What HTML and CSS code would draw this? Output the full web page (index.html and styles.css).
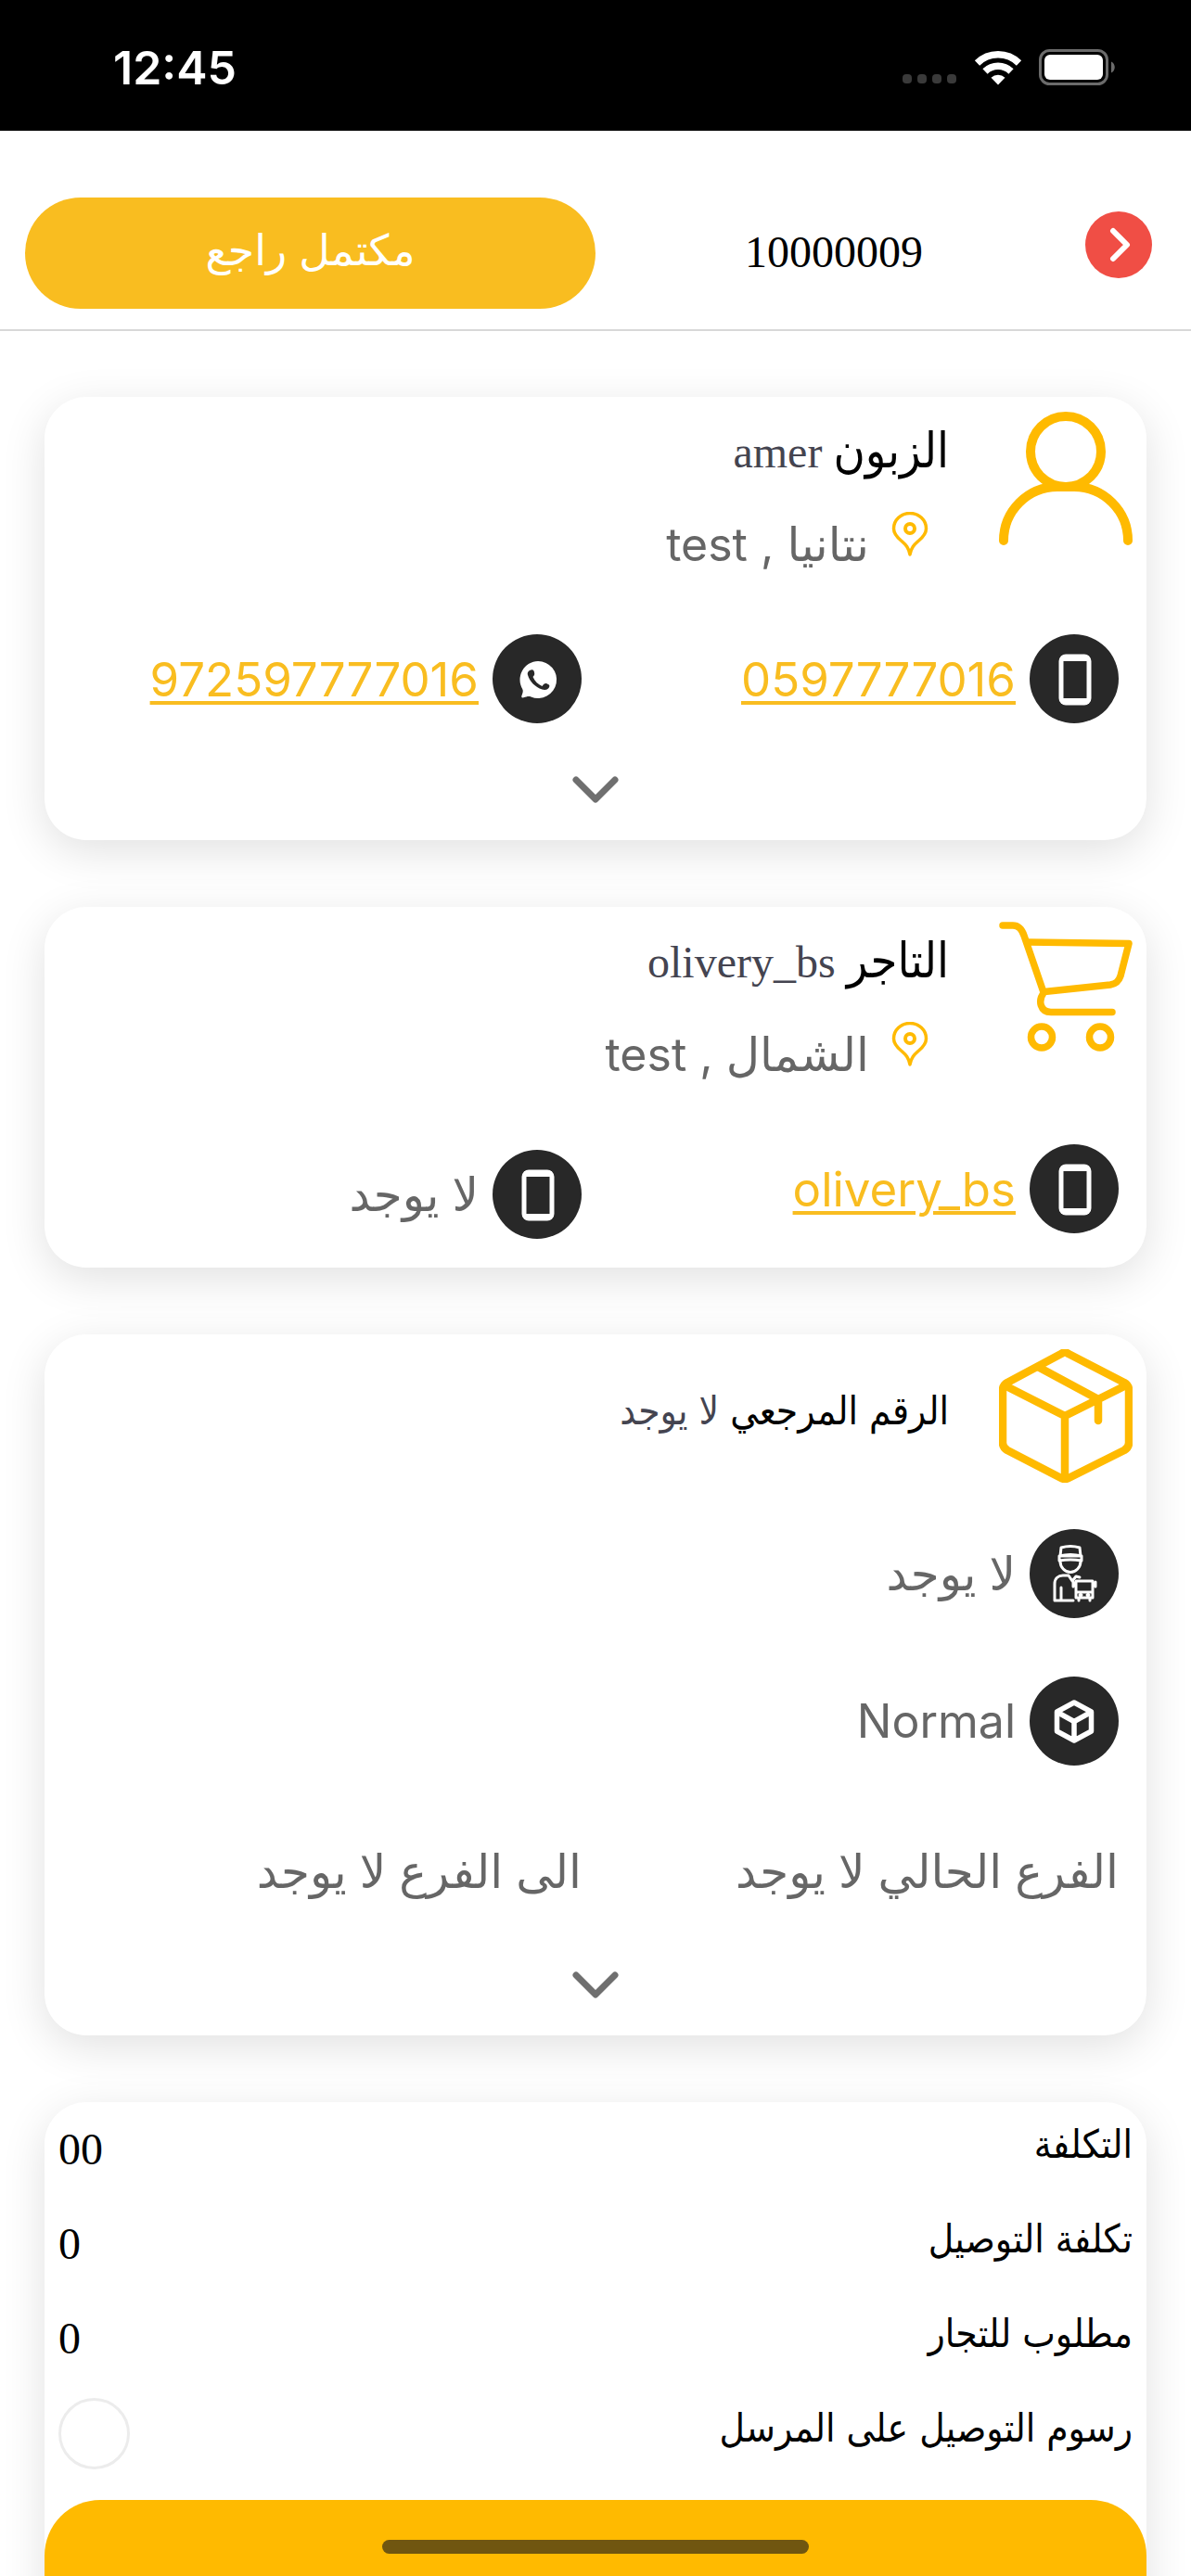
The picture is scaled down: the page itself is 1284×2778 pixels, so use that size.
FILE: index.html
```html
<!DOCTYPE html>
<html lang="ar" dir="rtl">
<head>
    <meta charset="UTF-8">
    <meta name="viewport" content="width=device-width, initial-scale=1.0">
    <title>10000009</title>
    <link rel="stylesheet" href="styles.css">
</head>
<body>
    <!-- Shared icons -->
    <svg class="sprite" aria-hidden="true">
        <symbol id="icon-pin" viewBox="0 0 48 48">
            <path d="M24 46c-1.500-8-4.500-10.500-9-14.500C9.500 27 6.500 23.500 6.500 18a17.500 16.500 0 0 1 35 0c0 5.500-3 9-8.500 13.500-4.500 4-7.500 6.500-9 14.500z" fill="none" stroke="#ffba00" stroke-width="3.500" stroke-linejoin="round"/>
            <circle cx="24" cy="18" r="5" fill="none" stroke="#ffba00" stroke-width="4"/>
        </symbol>
        <symbol id="icon-phone" viewBox="0 0 96 96">
            <rect x="34" y="24" width="30" height="50" rx="5" fill="none" stroke="#fff" stroke-width="5"/>
            <path d="M34 26h30M34 72h30" stroke="#fff" stroke-width="6"/>
        </symbol>
        <symbol id="icon-chevron" viewBox="0 0 54 32">
            <path d="M6 5l21 21L48 5" fill="none" stroke="#6f6f6f" stroke-width="7" stroke-linecap="round" stroke-linejoin="round"/>
        </symbol>
    </svg>

    <div class="status-bar" dir="ltr">
        <span class="clock">12:45</span>
        <div class="indicators">
            <svg width="60" height="54" viewBox="0 0 60 54">
                <g fill="#3a3a3a"><rect x="1" y="34" width="10" height="10" rx="4"/><rect x="17" y="34" width="10" height="10" rx="4"/><rect x="33" y="34" width="10" height="10" rx="4"/><rect x="49" y="34" width="10" height="10" rx="4"/></g>
            </svg>
            <svg width="52" height="38" viewBox="0 0 52 38">
                <g fill="none" stroke="#fff" stroke-width="7.500">
                    <path d="M3.500 14a32 32 0 0 1 45 0"/>
                    <path d="M12 23a20 20 0 0 1 28 0"/>
                </g>
                <path d="M26 37.500l-7.500-7.700a11 11 0 0 1 15 0z" fill="#fff"/>
            </svg>
            <svg width="84" height="40" viewBox="0 0 84 40">
                <rect x="1.500" y="1.500" width="72" height="36" rx="10" fill="none" stroke="#6b6b6b" stroke-width="3"/>
                <rect x="6" y="6" width="63" height="27" rx="6" fill="#fff"/>
                <path d="M78 13.500c5 2 5 10 0 12z" fill="#6b6b6b"/>
            </svg>
        </div>
    </div>

    <header class="top-bar">
        <button class="back-button" aria-label="رجوع">
            <svg width="72" height="72" viewBox="0 0 72 72">
                <path d="M30 21l15 15-15 15" fill="none" stroke="#fff" stroke-width="6" stroke-linecap="round" stroke-linejoin="round"/>
            </svg>
        </button>
        <h1 class="order-number">10000009</h1>
        <button class="status-button">مكتمل راجع</button>
    </header>

    <main>
        <section class="card">
            <div class="card-head">
                <svg class="card-icon" viewBox="0 0 144 144">
                    <g fill="none" stroke="#ffba00" stroke-width="10" stroke-linecap="round">
                        <circle cx="72" cy="43" r="38"/>
                        <path d="M5 139c0-32 26-58 58-58h18c32 0 58 26 58 58"/>
                    </g>
                </svg>
                <div>
                    <h2><span class="label">الزبون</span> amer</h2>
                    <p class="address"><svg class="pin"><use href="#icon-pin"/></svg><span>نتانيا , test</span></p>
                </div>
            </div>
            <div class="row">
                <div class="item"><svg class="badge"><use href="#icon-phone"/></svg><a href="tel:0597777016">0597777016</a></div>
                <div class="item">
                    <svg class="badge" viewBox="0 0 96 96">
                        <path d="M49 29a20 20 0 1 1-7.500 38.500c-3-1-5 0-8 .8-2 .5-2.700-.3-2-2.300.8-2.500 2-4.500.7-7A20 20 0 0 1 49 29z" fill="#fff"/>
                        <path d="M41.500 38.500c2-.8 3 .3 3.500 2.500.6 2.400.2 3-1.500 5 2.500 5 5.500 8 10 10 1.800-2.500 3-3.500 5.500-2.500 2.700 1 3 2 1.500 4.500-1.500 2-4 2.500-7 1.500C46 57 40 51 38 44c-.8-3 .8-4.700 3.500-5.500z" fill="#282828"/>
                    </svg>
                    <a href="https://wa.me/972597777016">972597777016</a>
                </div>
            </div>
            <button class="expand" aria-label="المزيد"><svg width="54" height="32"><use href="#icon-chevron"/></svg></button>
        </section>

        <section class="card">
            <div class="card-head">
                <svg class="card-icon" viewBox="0 0 144 144">
                    <g fill="none" stroke="#ffba00" stroke-width="7.500" stroke-linecap="round" stroke-linejoin="round">
                        <path d="M4 4h11c7 0 10 5 12 11l21 61"/>
                        <path d="M31 22l109 1.500-9 35c-2 6-5 8.500-11 9.500l-71 7.500c-8 10-4 22 7 22h66"/>
                        <circle cx="46" cy="124.500" r="11.500"/>
                        <circle cx="109" cy="124.500" r="11.500"/>
                    </g>
                </svg>
                <div>
                    <h2><span class="label">التاجر</span> olivery_bs</h2>
                    <p class="address"><svg class="pin"><use href="#icon-pin"/></svg><span>الشمال , test</span></p>
                </div>
            </div>
            <div class="row">
                <div class="item"><svg class="badge"><use href="#icon-phone"/></svg><a href="#">olivery_bs</a></div>
                <div class="item plain"><svg class="badge"><use href="#icon-phone"/></svg><span>لا يوجد</span></div>
            </div>
        </section>

        <section class="card">
            <div class="card-head single">
                <svg class="card-icon" viewBox="0 0 144 144">
                    <g fill="none" stroke="#ffba00" stroke-width="8.500" stroke-linecap="round" stroke-linejoin="round">
                        <path d="M67 5q4-3 8 0l60 31q5 3 5 8v57q0 5-5 8l-60 30q-4 2-8 0l-58-30q-5-3-5-8V44q0-5 5-8z"/>
                        <path d="M6 39l65 33 66-33M71 72v66M42 19l65 35v23"/>
                    </g>
                </svg>
                <h2><span class="label">الرقم المرجعي</span> <span class="value">لا يوجد</span></h2>
            </div>
            <div class="row">
                <div class="item plain">
                    <svg class="badge" viewBox="0 0 96 96">
                        <g fill="none" stroke="#fff" stroke-width="3" stroke-linecap="round" stroke-linejoin="round">
                            <path d="M34 20q10-3 20 0l1 9H33zM32 29q12-3 24 0v5q-12-2-24 0z"/>
                            <path d="M33 35c0 6 5 11.500 11 11.500S55 41 55 35"/>
                            <path d="M47 77H27V59c0-6 4-9 9-9h6l4 6 4-5 4 1M34 77V63"/>
                            <path d="M50 56h18v18H50zM47 57v5M71 57v5M50 68h18M53 74v3M65 74v3M54 71h2M62 71h2"/>
                        </g>
                    </svg>
                    <span>لا يوجد</span>
                </div>
            </div>
            <div class="row">
                <div class="item">
                    <svg class="badge" viewBox="0 0 96 96">
                        <path d="M48 28l18.500 10v21L48 69 29.500 59V38zM30 38.500l18 10 18-10M48 48.500V69" fill="none" stroke="#fff" stroke-width="5.500" stroke-linejoin="round"/>
                    </svg>
                    <span>Normal</span>
                </div>
            </div>
            <div class="row">
                <div class="item text-only">الفرع الحالي لا يوجد</div>
                <div class="item text-only">الى الفرع لا يوجد</div>
            </div>
            <button class="expand" aria-label="المزيد"><svg width="54" height="32"><use href="#icon-chevron"/></svg></button>
        </section>

        <section class="card totals">
            <div class="total-row"><span class="label">التكلفة</span><span>00</span></div>
            <div class="total-row"><span class="label">تكلفة التوصيل</span><span>0</span></div>
            <div class="total-row"><span class="label">مطلوب للتجار</span><span>0</span></div>
            <div class="total-row">
                <label class="label" for="sender-fees">رسوم التوصيل على المرسل</label>
                <input type="checkbox" id="sender-fees">
            </div>
            <button class="main-action" aria-label="تغيير الحالة"></button>
        </section>
    </main>
    <div class="home-indicator"></div>
</body>
</html>
```
FILE: styles.css
```css
* {
    box-sizing: border-box;
}
body {
    margin: 0;
    height: 100vh;
    overflow: hidden;
    background: #ffffff;
    color: #666666;
    font-family: Inter, "DejaVu Sans", sans-serif;
    font-size: 50px;
}
h1, h2, p {
    margin: 0;
    font-weight: normal;
}
svg {
    display: block;
    flex-shrink: 0;
}
button {
    border: none;
    padding: 0;
    background: none;
    font-family: inherit;
    cursor: pointer;
}
.sprite {
    position: absolute;
    width: 0;
    height: 0;
}

/* Status bar */
.status-bar {
    display: flex;
    justify-content: space-between;
    align-items: center;
    height: 141px;
    padding: 5px 80px 0 122px;
    background: #000000;
    color: #ffffff;
}
.clock {
    font-size: 50px;
    font-weight: 600;
}
.indicators {
    display: flex;
    align-items: center;
    gap: 18px;
}

/* Top bar */
.top-bar {
    display: flex;
    align-items: center;
    padding: 72px 27px 22px;
    border-bottom: 2px solid #d8d8d8;
}
.back-button {
    align-self: flex-start;
    margin: 15px 15px 0 0;
    border-radius: 50%;
    background: #f04e45;
}
.order-number {
    flex: 1;
    padding: 0 14px 4px 0;
    color: #000000;
    font-family: "Liberation Serif", serif;
    font-size: 48px;
    text-align: center;
}
.status-button {
    width: 50%;
    height: 120px;
    padding-bottom: 8px;
    border-radius: 60px;
    background: #f9bd20;
    color: #ffffff;
    font-size: 46px;
}

/* Cards */
main {
    display: flex;
    flex-direction: column;
    gap: 72px;
    padding: 71px 48px 0;
}
.card {
    border-radius: 45px;
    background: #ffffff;
    box-shadow: 0 12px 48px rgba(0, 0, 0, 0.12);
}
.card-head {
    display: flex;
    gap: 54px;
    padding: 16px 15px 62px;
}
.card-head.single {
    padding-bottom: 44px;
}
.card-icon {
    width: 144px;
    height: 144px;
}
h2 {
    color: #444450;
    font-family: "Liberation Serif", "DejaVu Sans Condensed", serif;
    font-size: 48px;
    line-height: 88px;
}
.single h2 {
    line-height: 130px;
}
.label, .value {
    font-family: "DejaVu Sans Condensed", "DejaVu Sans", sans-serif;
    font-size: 42px;
    line-height: 1;
}
.label {
    color: #000000;
}
.card-head:not(.single) .label {
    font-size: 52px;
}
.address {
    display: flex;
    gap: 20px;
    margin-top: 20px;
    padding-right: 18px;
    line-height: 70px;
}
.pin {
    width: 48px;
    height: 48px;
}
.row {
    display: flex;
    padding-right: 30px;
}
.row + .row {
    margin-top: 63px;
}
.item {
    display: flex;
    align-items: center;
    gap: 15px;
    width: 50%;
    height: 96px;
}
.item.plain {
    height: 102px;
    padding-top: 6px;
}
.item.text-only {
    height: 102px;
}
.item a {
    color: #f9bd20;
    font-size: 51px;
    text-decoration-thickness: 4px;
    text-underline-offset: 5px;
}
.badge {
    width: 96px;
    height: 96px;
    border-radius: 50%;
    background: #282828;
}
.row:last-child {
    padding-bottom: 31px;
}
.expand {
    display: flex;
    align-items: center;
    justify-content: center;
    width: 100%;
    height: 126px;
    padding-top: 18px;
}

/* Totals */
.total-row {
    display: flex;
    justify-content: space-between;
    height: 102px;
    padding: 0 15px;
    color: #000000;
    font-family: "Liberation Serif", serif;
    font-size: 48px;
    line-height: 102px;
}
.total-row .label {
    line-height: 92px;
}
.total-row input {
    appearance: none;
    align-self: center;
    width: 77px;
    height: 77px;
    margin: 0;
    border: 3px solid #ececec;
    border-radius: 50%;
}
.main-action {
    display: block;
    width: 100%;
    height: 150px;
    margin-top: 21px;
    border-radius: 60px;
    background: #ffba00;
}
.home-indicator {
    position: fixed;
    bottom: 24px;
    left: 50%;
    width: 460px;
    height: 15px;
    margin-left: -230px;
    border-radius: 8px;
    background: #705610;
}
```
